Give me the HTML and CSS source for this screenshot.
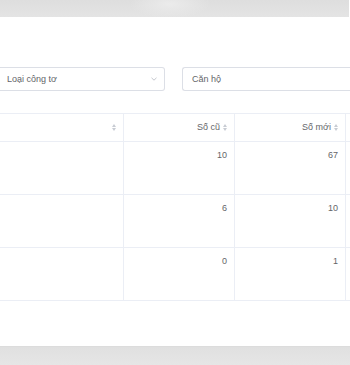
FILE: index.html
```html
<!DOCTYPE html>
<html lang="vi">
<head>
    <meta charset="UTF-8">
    <meta name="viewport" content="width=device-width, initial-scale=1.0">
    <title>Chỉ số công tơ</title>
    <link rel="stylesheet" href="styles.css">
</head>
<body>
    <div class="topbar"></div>

    <div class="page">
        <div class="filters">
            <div class="select">
                <span>Loại công tơ</span>
                <svg class="chevron" width="6" height="4" viewBox="0 0 6 4">
                    <path d="M0.5 0.8 L3 3.2 L5.5 0.8" fill="none" stroke="#b4b8c0" stroke-width="0.8"/>
                </svg>
            </div>
            <div class="input">Căn hộ</div>
        </div>

        <div class="table">
            <div class="row head">
                <div class="cell"><span class="sort"></span></div>
                <div class="cell">Số cũ <span class="sort"></span></div>
                <div class="cell">Số mới <span class="sort"></span></div>
                <div class="cell"></div>
            </div>
            <div class="row">
                <div class="cell"></div>
                <div class="cell">10</div>
                <div class="cell">67</div>
                <div class="cell"></div>
            </div>
            <div class="row">
                <div class="cell"></div>
                <div class="cell">6</div>
                <div class="cell">10</div>
                <div class="cell"></div>
            </div>
            <div class="row">
                <div class="cell"></div>
                <div class="cell">0</div>
                <div class="cell">1</div>
                <div class="cell"></div>
            </div>
        </div>
    </div>

    <div class="bottombar"></div>
</body>
</html>
```

FILE: styles.css
```css
:root {
    --border: #ebeef5;
    --input-border: #dcdfe6;
    --text: #646569;
    --muted: #c8ccd3;
}

* {
    margin: 0;
    padding: 0;
    box-sizing: border-box;
    font-family: "Liberation Sans", Arial, sans-serif;
}

body {
    width: 350px;
    height: 365px;
    overflow: hidden;
    background: #ffffff;
    color: var(--text);
    font-size: 9px;
    display: flex;
    flex-direction: column;
}

.topbar {
    height: 17px;
    width: 349px;
    flex-shrink: 0;
    background: radial-gradient(ellipse 40px 14px at 170px 4px, #ebebeb, rgba(235, 235, 235, 0)),
        linear-gradient(#dedede, #e4e4e4);
}

.page {
    flex: 1;
    width: 350px;
    overflow: hidden;
}

.filters {
    display: flex;
    gap: 17px;
    margin-top: 50px;
}

.select,
.input {
    height: 24px;
    border: 1px solid var(--input-border);
    border-radius: 3px;
    display: flex;
    align-items: center;
    color: var(--text);
}

.select {
    width: 165px;
    border-left: none;
    border-top-left-radius: 0;
    border-bottom-left-radius: 0;
    padding: 0 7px;
    justify-content: space-between;
}

.input {
    flex: 1;
    border-right: none;
    border-top-right-radius: 0;
    border-bottom-right-radius: 0;
    padding: 0 9px;
}

.table {
    margin-top: 22px;
    border-top: 1px solid var(--border);
}

.row {
    display: grid;
    grid-template-columns: 124px 111px 111px 1fr;
    height: 53px;
    border-bottom: 1px solid var(--border);
}

.row.head {
    height: 28px;
}

.cell {
    border-right: 1px solid var(--border);
    text-align: right;
    padding: 8px 7px 0 0;
    line-height: 11px;
}

.cell:last-child {
    border-right: none;
}

.head .cell {
    display: flex;
    align-items: center;
    justify-content: flex-end;
    padding: 0 6px 0 0;
    gap: 3px;
}

.sort {
    display: inline-flex;
    flex-direction: column;
    gap: 1px;
    width: 5px;
}

.sort::before,
.sort::after {
    content: "";
    display: block;
    width: 0;
    height: 0;
    border-left: 2.5px solid transparent;
    border-right: 2.5px solid transparent;
}

.sort::before {
    border-bottom: 3px solid var(--muted);
}

.sort::after {
    border-top: 3px solid var(--muted);
}

.bottombar {
    height: 19px;
    flex-shrink: 0;
    border-top: 1px solid #dcdcdc;
    background: linear-gradient(#e0e0e0, #e6e6e6);
}
```
